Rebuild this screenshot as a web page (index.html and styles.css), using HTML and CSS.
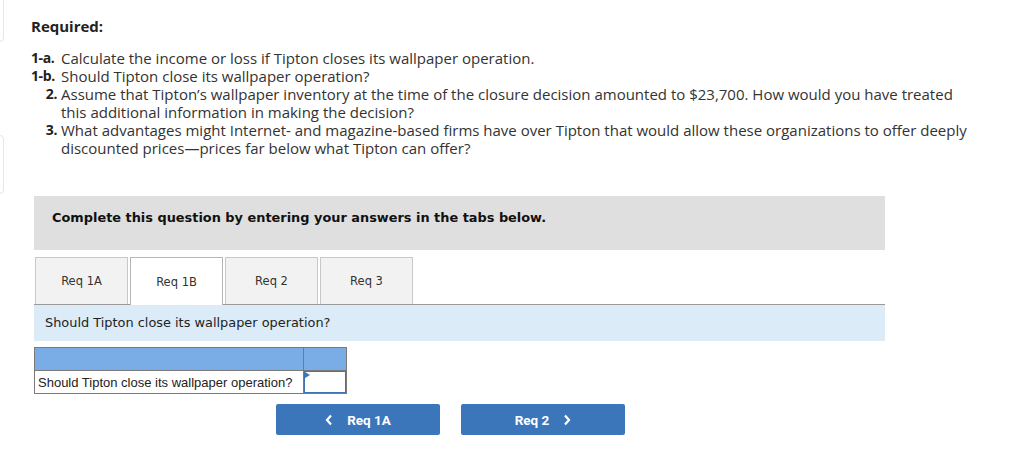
FILE: index.html
```html
<!DOCTYPE html>
<html>
<head>
<meta charset="utf-8">
<link rel="stylesheet" href="styles.css">
</head>
<body>
<div class="side side-top"></div>
<div class="side side-mid"></div>
<div class="page">
  <div class="required">Required:</div>
  <div class="reqlist">
    <div class="lbl">1-a.</div><div class="txt">Calculate the income or loss if Tipton closes its wallpaper operation.</div>
    <div class="lbl">1-b.</div><div class="txt">Should Tipton close its wallpaper operation?</div>
    <div class="lbl">2.</div><div class="txt">Assume that Tipton’s wallpaper inventory at the time of the closure decision amounted to $23,700. How would you have treated this additional information in making the decision?</div>
    <div class="lbl">3.</div><div class="txt">What advantages might Internet- and magazine-based firms have over Tipton that would allow these organizations to offer deeply discounted prices—prices far below what Tipton can offer?</div>
  </div>
</div>
<div class="widget">
  <div class="banner">Complete this question by entering your answers in the tabs below.</div>
  <div class="tabs">
    <div class="tab">Req 1A</div>
    <div class="tab active">Req 1B</div>
    <div class="tab">Req 2</div>
    <div class="tab">Req 3</div>
  </div>
  <div class="prompt">Should Tipton close its wallpaper operation?</div>
  <table class="answer">
    <tr class="head"><td class="c1"></td><td class="c2"></td></tr>
    <tr><td class="c1 q">Should Tipton close its wallpaper operation?</td><td class="c2 inp"><span class="flag"></span></td></tr>
  </table>
  <div class="nav">
    <div class="btn"><svg class="chev" width="8" height="12" viewBox="0 0 8 12"><path d="M6 1.5 L2 6 L6 10.5" fill="none" stroke="#fff" stroke-width="2.2"/></svg><span>Req 1A</span></div>
    <div class="btn"><span>Req 2</span><svg class="chev" width="8" height="12" viewBox="0 0 8 12"><path d="M2 1.5 L6 6 L2 10.5" fill="none" stroke="#fff" stroke-width="2.2"/></svg></div>
  </div>
</div>
</body>
</html>
```
FILE: styles.css
```css
html, body { margin: 0; padding: 0; background: #fff; }
body { position: relative; width: 1016px; height: 453px; overflow: hidden; }
.side { position: absolute; left: -6px; width: 8px; border: 1px solid #e6e6e6; border-radius: 4px; }
.side-top { top: -10px; height: 50px; }
.side-mid { top: 135px; height: 57px; }
.page { padding: 17px 0 0 31px; font-family: "Open Sans", "Lato", sans-serif; font-size: 15px; line-height: 18px; color: #333; }
.required { font-weight: bold; color: #222; }
.reqlist { margin-top: 14px; display: grid; grid-template-columns: 26px 912px; column-gap: 4px; }
.lbl { font-weight: bold; font-size: 14px; letter-spacing: -0.4px; text-align: right; color: #222; white-space: nowrap; }
.lbl:nth-child(1), .lbl:nth-child(3) { text-align: left; }
.widget { margin: 39px 0 0 34px; width: 851px; font-family: "DejaVu Sans", Verdana, sans-serif; }
.banner { background: #dfdfdf; height: 54px; box-sizing: border-box; padding: 14px 18px; font-size: 12.9px; font-weight: bold; line-height: 16px; color: #111; }
.tabs { margin-top: 7px; display: flex; gap: 2px; border-bottom: 1px solid #9a9a9a; height: 47px; padding-left: 1px; }
.tab { width: 93px; box-sizing: border-box; height: 47px; background: #f2f2f2; border: 1px solid #c8c8c8; border-bottom: none; font-size: 11.5px; color: #333; display: flex; align-items: center; justify-content: center; }
.tab.active { background: #fff; border-color: #b5b5b5; height: 48px; }
.prompt { background: #dbebf8; height: 36px; box-sizing: border-box; padding: 10px 11px; font-size: 12.9px; line-height: 16px; color: #222; }
.answer { margin-top: 6px; border-collapse: collapse; font-family: "Liberation Sans", Arial, sans-serif; font-size: 13px; color: #222; }
.answer td { border: 1px solid #7a7a7a; padding: 0; height: 22px; }
.answer .c1 { width: 265px; }
.answer .c2 { width: 42px; }
.answer .head td { background: #7aace5; }
.answer .q { padding-left: 3px; }
.answer .inp { position: relative; box-shadow: inset 0 0 0 1px #3d74b8; background: #fff; }
.flag { position: absolute; left: 1px; top: 1px; width: 0; height: 0; border-top: 3px solid transparent; border-bottom: 3px solid transparent; border-left: 5px solid #3d74b8; }
.nav { margin-top: 10px; margin-left: 242px; display: flex; gap: 21px; }
.btn { width: 164px; height: 31px; background: #3b76bb; border-radius: 2px; color: #fff; font-family: "Roboto", sans-serif; font-weight: bold; font-size: 13.5px; display: flex; align-items: center; justify-content: center; gap: 14px; }
```
